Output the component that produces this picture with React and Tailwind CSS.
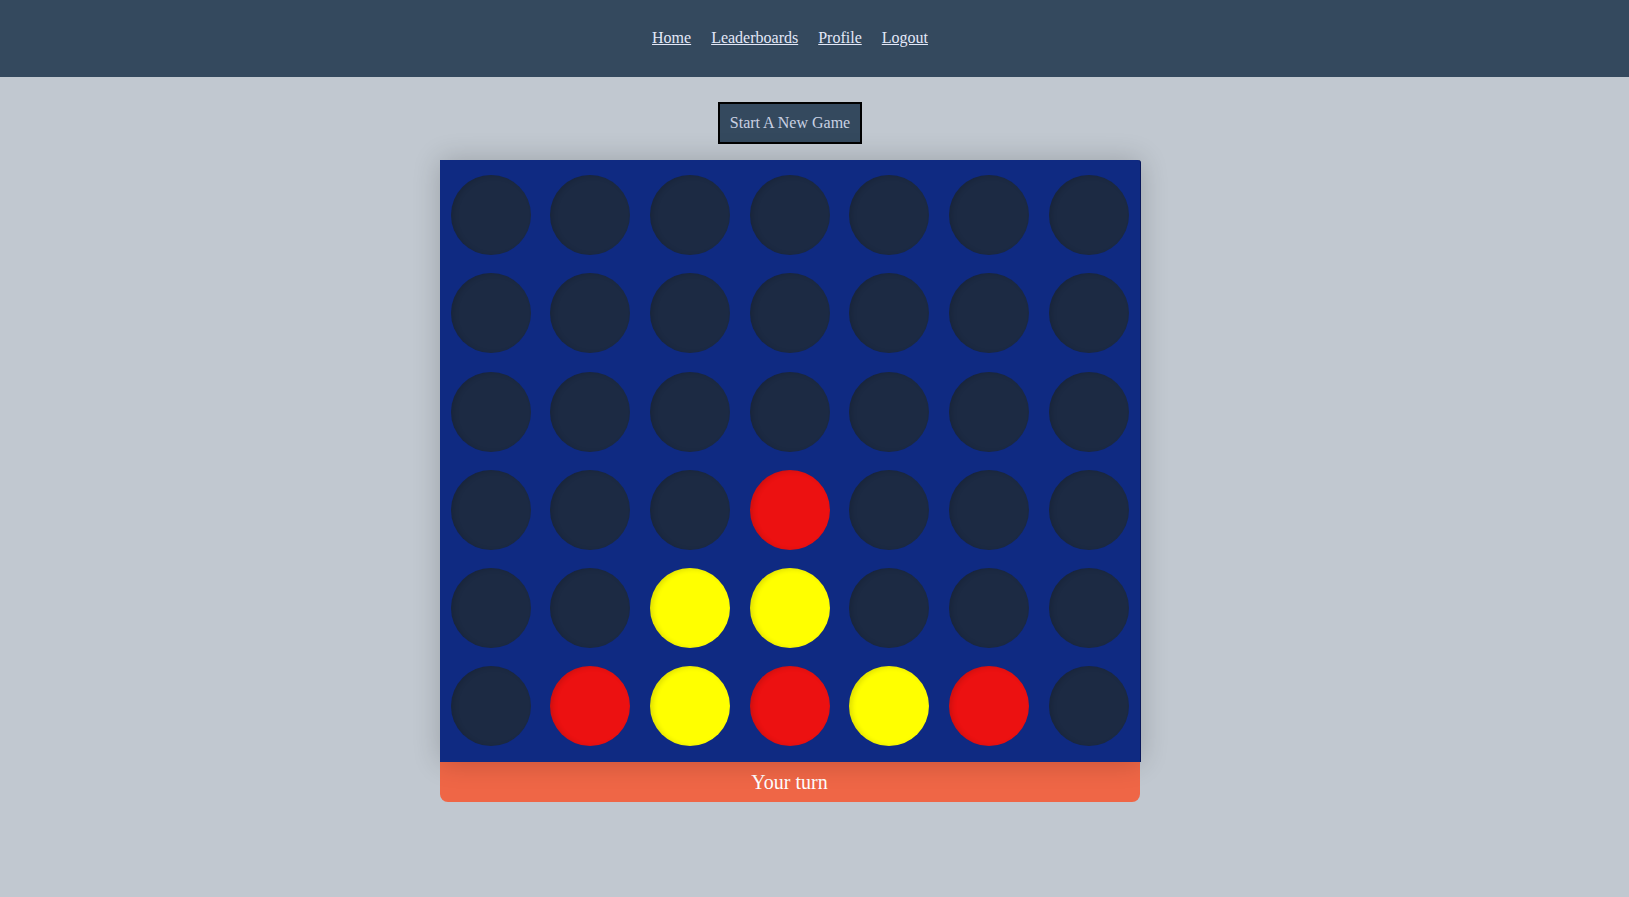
import React from 'react'

// 0 = empty, 1 = red, 2 = yellow
const BOARD = [
  [0, 0, 0, 0, 0, 0, 0],
  [0, 0, 0, 0, 0, 0, 0],
  [0, 0, 0, 0, 0, 0, 0],
  [0, 0, 0, 1, 0, 0, 0],
  [0, 0, 2, 2, 0, 0, 0],
  [0, 1, 2, 1, 2, 1, 0],
]

const CHIP = {
  0: 'bg-[#1c2a43] shadow-[inset_3px_1px_5px_rgba(0,0,0,0.12)]',
  1: 'bg-[#ec1111] shadow-[inset_3px_1px_5px_rgba(0,0,0,0.12)]',
  2: 'bg-[#ffff00] shadow-[inset_3px_1px_5px_rgba(0,0,0,0.12)]',
}

const LINKS = ['Home', 'Leaderboards', 'Profile', 'Logout']

export default function App() {
  return (
    <div className="min-h-[897px] bg-[#c1c8d0] font-['Liberation_Serif',serif]">
      {/* 导航栏 */}
      <nav className="h-[77px] bg-[#34495e]">
        <div className="w-[1580px] h-full flex items-center justify-center gap-5 pb-[2px]">
          {LINKS.map(link => (
            <a key={link} href="#" className="text-[16px] text-[#e3e8f8] underline">
              {link}
            </a>
          ))}
        </div>
      </nav>

      <div className="w-[1580px] flex flex-col items-center">
        <button className="mt-[25px] h-[42px] px-[10px] bg-[#34495e] border-2 border-black text-[16px] text-[#c9d1e3]">
          Start A New Game
        </button>

        {/* 棋盘 */}
        <div className="mt-4 flex flex-col">
          <div className="relative z-10 w-[701px] h-[602px] bg-[#0f2a82] border-r border-[#08175a] rounded-tr-[3px] shadow-[0_0_28px_rgba(0,0,0,0.2)] pt-[15px] pl-[11px] flex flex-col gap-[18.3px]">
            {BOARD.map((row, r) => (
              <div key={r} className="flex">
                {row.map((v, c) => (
                  <div key={c} className="w-[99.7px] shrink-0">
                    <div className={`w-20 h-20 rounded-full ${CHIP[v]}`} />
                  </div>
                ))}
              </div>
            ))}
          </div>
          <div className="w-[700px] h-10 bg-[#ef6646] rounded-b-lg flex items-center justify-center text-[20px] text-white pb-[1px]">
            Your turn
          </div>
        </div>
      </div>
    </div>
  )
}
